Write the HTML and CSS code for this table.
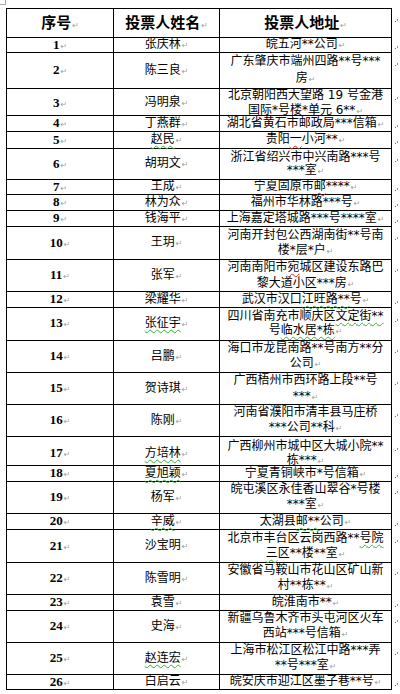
FILE: index.html
```html
<!DOCTYPE html>
<html lang="zh">
<head>
<meta charset="utf-8">
<title>投票人名单</title>
<link rel="stylesheet" href="styles.css">
</head>
<body>
<span class="corner"></span>
<div class="page">
  <div class="row head h30">
    <div class="cell first"><div class="t"><span class="hd">序号</span><span class="pm">↵</span></div></div>
    <div class="cell"><div class="t"><span class="hd">投票人姓名</span><span class="pm">↵</span></div></div>
    <div class="cell"><div class="t"><span class="hd">投票人地址</span><span class="pm">↵</span></div></div>
    <div class="cell m top"><div class="t"><span class="eor"></span></div></div>
  </div>
  <div class="row h15">
    <div class="cell first"><div class="t"><span class="num">1</span><span class="pm">↵</span></div></div>
    <div class="cell"><div class="t">张庆林<span class="pm">↵</span></div></div>
    <div class="cell"><div class="t">皖五河**公司<span class="pm">↵</span></div></div>
    <div class="cell m"><div class="t"><span class="eor"></span></div></div>
  </div>
  <div class="row h36 l17">
    <div class="cell first"><div class="t"><span class="num">2</span><span class="pm">↵</span></div></div>
    <div class="cell"><div class="t">陈三良<span class="pm">↵</span></div></div>
    <div class="cell"><div class="t">广东肇庆市端州四路**号***<br>房<span class="pm">↵</span></div></div>
    <div class="cell m"><div class="t"><span class="eor"></span><br>&nbsp;</div></div>
  </div>
  <div class="row h27 l15 sh">
    <div class="cell first"><div class="t"><span class="num">3</span><span class="pm">↵</span></div></div>
    <div class="cell"><div class="t">冯明泉<span class="pm">↵</span></div></div>
    <div class="cell"><div class="t">北京朝阳西大望路 19 号金港<br>国际*号楼*单元 6**<span class="pm">↵</span></div></div>
    <div class="cell m"><div class="t"><span class="eor"></span><br>&nbsp;</div></div>
  </div>
  <div class="row h16">
    <div class="cell first"><div class="t"><span class="num">4</span><span class="pm">↵</span></div></div>
    <div class="cell"><div class="t">丁燕群<span class="pm">↵</span></div></div>
    <div class="cell"><div class="t">湖北省黄石市邮政局***信箱<span class="pm">↵</span></div></div>
    <div class="cell m"><div class="t"><span class="eor"></span></div></div>
  </div>
  <div class="row h17">
    <div class="cell first"><div class="t"><span class="num">5</span><span class="pm">↵</span></div></div>
    <div class="cell"><div class="t"><span class="g">赵民</span><span class="pm">↵</span></div></div>
    <div class="cell"><div class="t">贵阳<span class="r">一</span>小河**<span class="pm">↵</span></div></div>
    <div class="cell m"><div class="t"><span class="eor"></span></div></div>
  </div>
  <div class="row h31 l13">
    <div class="cell first"><div class="t"><span class="num">6</span><span class="pm">↵</span></div></div>
    <div class="cell"><div class="t">胡玥文<span class="pm">↵</span></div></div>
    <div class="cell"><div class="t">浙江省绍兴市中兴南路***号<br>***室<span class="pm">↵</span></div></div>
    <div class="cell m"><div class="t"><span class="eor"></span><br>&nbsp;</div></div>
  </div>
  <div class="row h15">
    <div class="cell first"><div class="t"><span class="num">7</span><span class="pm">↵</span></div></div>
    <div class="cell"><div class="t">王成<span class="pm">↵</span></div></div>
    <div class="cell"><div class="t">宁夏固原市<span class="r">邮</span>****<span class="pm">↵</span></div></div>
    <div class="cell m"><div class="t"><span class="eor"></span></div></div>
  </div>
  <div class="row h16">
    <div class="cell first"><div class="t"><span class="num">8</span><span class="pm">↵</span></div></div>
    <div class="cell"><div class="t">林为众<span class="pm">↵</span></div></div>
    <div class="cell"><div class="t">福州市华林路***号<span class="pm">↵</span></div></div>
    <div class="cell m"><div class="t"><span class="eor"></span></div></div>
  </div>
  <div class="row h16">
    <div class="cell first"><div class="t"><span class="num">9</span><span class="pm">↵</span></div></div>
    <div class="cell"><div class="t">钱海平<span class="pm">↵</span></div></div>
    <div class="cell"><div class="t">上海嘉定塔城路***号****室<span class="pm">↵</span></div></div>
    <div class="cell m"><div class="t"><span class="eor"></span></div></div>
  </div>
  <div class="row h33">
    <div class="cell first"><div class="t"><span class="num">10</span><span class="pm">↵</span></div></div>
    <div class="cell"><div class="t">王玥<span class="pm">↵</span></div></div>
    <div class="cell"><div class="t">河南开封包公西湖南街**号南<br>楼*层*户<span class="pm">↵</span></div></div>
    <div class="cell m"><div class="t"><span class="eor"></span><br>&nbsp;</div></div>
  </div>
  <div class="row h32 l16">
    <div class="cell first"><div class="t"><span class="num">11</span><span class="pm">↵</span></div></div>
    <div class="cell"><div class="t">张军<span class="pm">↵</span></div></div>
    <div class="cell"><div class="t">河南南阳市<span class="r">宛</span>城区建设东路巴<br>黎大道小区***房<span class="pm">↵</span></div></div>
    <div class="cell m"><div class="t"><span class="eor"></span><br>&nbsp;</div></div>
  </div>
  <div class="row h16">
    <div class="cell first"><div class="t"><span class="num">12</span><span class="pm">↵</span></div></div>
    <div class="cell"><div class="t">梁耀华<span class="pm">↵</span></div></div>
    <div class="cell"><div class="t">武汉市汉口<span class="g">江旺路**</span>号<span class="pm">↵</span></div></div>
    <div class="cell m"><div class="t"><span class="eor"></span></div></div>
  </div>
  <div class="row h33 l14">
    <div class="cell first"><div class="t"><span class="num">13</span><span class="pm">↵</span></div></div>
    <div class="cell"><div class="t"><span class="g">张征宇</span><span class="pm">↵</span></div></div>
    <div class="cell"><div class="t">四川省南充市顺庆区<span class="g">文定街**</span><br>号<span class="g">临水居*栋</span><span class="pm">↵</span></div></div>
    <div class="cell m"><div class="t"><span class="eor"></span><br>&nbsp;</div></div>
  </div>
  <div class="row h32">
    <div class="cell first"><div class="t"><span class="num">14</span><span class="pm">↵</span></div></div>
    <div class="cell"><div class="t">吕鹏<span class="pm">↵</span></div></div>
    <div class="cell"><div class="t">海口市龙昆南路**号南方**分<br>公司<span class="pm">↵</span></div></div>
    <div class="cell m"><div class="t"><span class="eor"></span><br>&nbsp;</div></div>
  </div>
  <div class="row h32 l16">
    <div class="cell first"><div class="t"><span class="num">15</span><span class="pm">↵</span></div></div>
    <div class="cell"><div class="t">贺诗琪<span class="pm">↵</span></div></div>
    <div class="cell"><div class="t">广西梧州市西环路上段**号<br>***<span class="pm">↵</span></div></div>
    <div class="cell m"><div class="t"><span class="eor"></span><br>&nbsp;</div></div>
  </div>
  <div class="row h32">
    <div class="cell first"><div class="t"><span class="num">16</span><span class="pm">↵</span></div></div>
    <div class="cell"><div class="t">陈刚<span class="pm">↵</span></div></div>
    <div class="cell"><div class="t">河南省濮阳市清丰县马庄桥<br>***公司**科<span class="pm">↵</span></div></div>
    <div class="cell m"><div class="t"><span class="eor"></span><br>&nbsp;</div></div>
  </div>
  <div class="row h29 l14 sh2">
    <div class="cell first"><div class="t"><span class="num">17</span><span class="pm">↵</span></div></div>
    <div class="cell"><div class="t"><span class="g">方培林</span><span class="pm">↵</span></div></div>
    <div class="cell"><div class="t">广西柳州市城中区大城小院**<br>栋***<span class="pm">↵</span></div></div>
    <div class="cell m"><div class="t"><span class="eor"></span><br>&nbsp;</div></div>
  </div>
  <div class="row h16">
    <div class="cell first"><div class="t"><span class="num">18</span><span class="pm">↵</span></div></div>
    <div class="cell"><div class="t"><span class="g">夏旭颖</span><span class="pm">↵</span></div></div>
    <div class="cell"><div class="t">宁夏青铜峡市*号信箱<span class="pm">↵</span></div></div>
    <div class="cell m"><div class="t"><span class="eor"></span></div></div>
  </div>
  <div class="row h32">
    <div class="cell first"><div class="t"><span class="num">19</span><span class="pm">↵</span></div></div>
    <div class="cell"><div class="t">杨军<span class="pm">↵</span></div></div>
    <div class="cell"><div class="t">皖屯溪区永佳香山翠谷*号楼<br>***室<span class="pm">↵</span></div></div>
    <div class="cell m"><div class="t"><span class="eor"></span><br>&nbsp;</div></div>
  </div>
  <div class="row h16">
    <div class="cell first"><div class="t"><span class="num">20</span><span class="pm">↵</span></div></div>
    <div class="cell"><div class="t"><span class="g">辛威</span><span class="pm">↵</span></div></div>
    <div class="cell"><div class="t">太湖县<span class="g">邮**</span>公司<span class="pm">↵</span></div></div>
    <div class="cell m"><div class="t"><span class="eor"></span></div></div>
  </div>
  <div class="row h33">
    <div class="cell first"><div class="t"><span class="num">21</span><span class="pm">↵</span></div></div>
    <div class="cell"><div class="t">沙宝明<span class="pm">↵</span></div></div>
    <div class="cell"><div class="t">北京市丰台区云岗西路**<span class="g">号院</span><br><span class="g">三</span>区**楼**室<span class="pm">↵</span></div></div>
    <div class="cell m"><div class="t"><span class="eor"></span><br>&nbsp;</div></div>
  </div>
  <div class="row h32">
    <div class="cell first"><div class="t"><span class="num">22</span><span class="pm">↵</span></div></div>
    <div class="cell"><div class="t">陈雪明<span class="pm">↵</span></div></div>
    <div class="cell"><div class="t">安徽省马鞍山市花山区矿山新<br>村**栋**<span class="pm">↵</span></div></div>
    <div class="cell m"><div class="t"><span class="eor"></span><br>&nbsp;</div></div>
  </div>
  <div class="row h16">
    <div class="cell first"><div class="t"><span class="num">23</span><span class="pm">↵</span></div></div>
    <div class="cell"><div class="t">袁雪<span class="pm">↵</span></div></div>
    <div class="cell"><div class="t">皖淮南市**<span class="pm">↵</span></div></div>
    <div class="cell m"><div class="t"><span class="eor"></span></div></div>
  </div>
  <div class="row h32">
    <div class="cell first"><div class="t"><span class="num">24</span><span class="pm">↵</span></div></div>
    <div class="cell"><div class="t">史海<span class="pm">↵</span></div></div>
    <div class="cell"><div class="t">新疆乌鲁木齐市头屯河区火车<br>西站***号信箱<span class="pm">↵</span></div></div>
    <div class="cell m"><div class="t"><span class="eor"></span><br>&nbsp;</div></div>
  </div>
  <div class="row h32">
    <div class="cell first"><div class="t"><span class="num">25</span><span class="pm">↵</span></div></div>
    <div class="cell"><div class="t"><span class="g">赵连宏</span><span class="pm">↵</span></div></div>
    <div class="cell"><div class="t">上海市松江区松江中路***弄<br>**号***室<span class="pm">↵</span></div></div>
    <div class="cell m"><div class="t"><span class="eor"></span><br>&nbsp;</div></div>
  </div>
  <div class="row h15">
    <div class="cell first"><div class="t"><span class="num">26</span><span class="pm">↵</span></div></div>
    <div class="cell"><div class="t">白启云<span class="pm">↵</span></div></div>
    <div class="cell"><div class="t">皖安庆市迎江区墨子巷**号<span class="pm">↵</span></div></div>
    <div class="cell m"><div class="t"><span class="eor"></span></div></div>
  </div>
</div>
</body>
</html>
```
FILE: styles.css
```css
html, body {
  margin: 0;
  padding: 0;
  background: #ffffff;
}
body {
  position: relative;
  font-family: "Noto Sans CJK SC", "Noto Sans", sans-serif;
  color: #000000;
  width: 400px;
  height: 694px;
  overflow: hidden;
}
.corner {
  position: absolute;
  left: 0;
  top: 0;
  width: 5px;
  height: 4px;
  border-right: 1px solid #a8a8a8;
  border-bottom: 1px solid #a8a8a8;
}
.page {
  padding: 8px 0 0 6px;
}
.row {
  display: grid;
  grid-template-columns: 108px 106px 172px 9px;
  line-height: 15px;
}
.cell {
  box-sizing: border-box;
  border-right: 1px solid #000;
  border-bottom: 1px solid #000;
  display: flex;
  align-items: center;
  justify-content: center;
  white-space: nowrap;
  font-family: "DejaVu Sans", "Noto Sans CJK SC", sans-serif;
  font-size: 12px;
  min-height: 0;
}
.t {
  text-align: center;
}
.cell.first {
  border-left: 1px solid #000;
}
.head .cell {
  border-top: 1px solid #000;
}
.cell.m {
  border: none;
  justify-content: flex-start;
  padding-left: 3px;
}
.cell.m .t {
  text-align: left;
}
.cell.m.top {
  align-items: flex-start;
  padding-top: 3px;
}
.hd {
  font-family: "Noto Sans CJK SC", sans-serif;
  font-size: 15px;
  font-weight: 700;
  line-height: 18px;
}
.num {
  font-family: "Liberation Serif", serif;
  font-weight: 700;
  font-size: 13px;
}
.pm {
  color: #a0a0a0;
  font-family: "DejaVu Sans", sans-serif;
  font-size: 8px;
  margin-left: 1px;
}
.g {
  text-decoration: underline wavy #33b033;
  text-decoration-thickness: 1px;
  text-underline-offset: 2px;
}
.r {
  text-decoration: underline wavy #e02020;
  text-decoration-thickness: 1px;
  text-underline-offset: 2px;
}
.eor {
  display: inline-block;
  width: 1px;
  height: 1px;
  background: #707070;
  box-shadow: 2px -1px 0 #909090, 2px -2px 0 #909090;
  vertical-align: baseline;
}
.h15 { height: 15px; }
.h16 { height: 16px; }
.h17 { height: 17px; }
.h27 { height: 27px; }
.h29 { height: 29px; }
.h30 { height: 30px; }
.h31 { height: 31px; }
.h32 { height: 32px; }
.h33 { height: 33px; }
.h36 { height: 36px; }
.l13 { line-height: 13px; }
.l14 { line-height: 14px; }
.l15 { line-height: 15px; }
.l16 { line-height: 16px; }
.l17 { line-height: 17px; }
.sh .cell { padding-top: 2px; }
.sh2 .cell { padding-top: 5px; }
```
